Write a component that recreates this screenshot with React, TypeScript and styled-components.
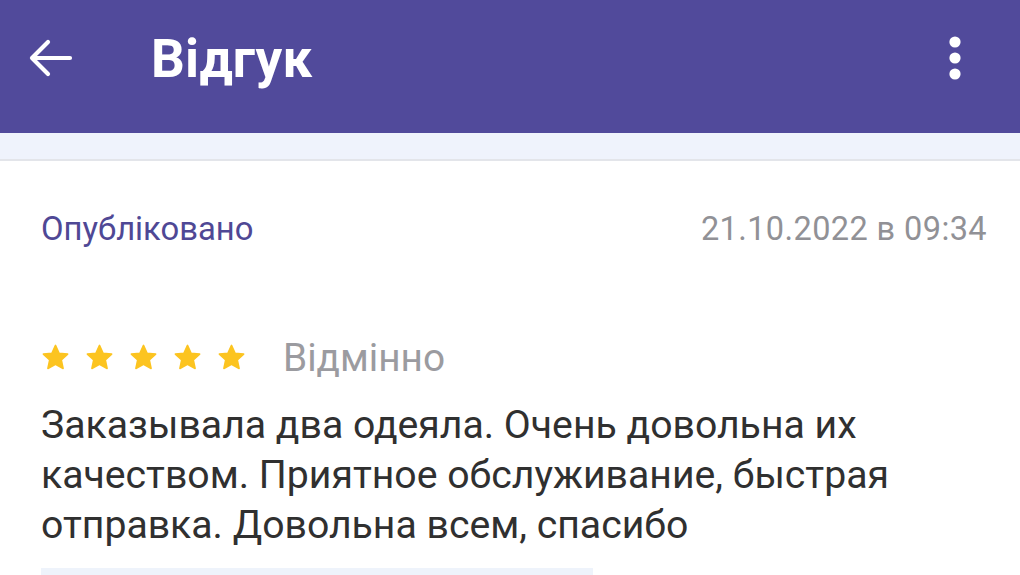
import React from "react";
import styled, { createGlobalStyle } from "styled-components";

const Global = createGlobalStyle`
  html, body { margin: 0; padding: 0; background: #ffffff; }
  body { font-family: Roboto, "Noto Sans", sans-serif; overflow: hidden; }
  * { box-sizing: border-box; }
`;

const Page = styled.div`
  width: 1020px;
  height: 575px;
  display: flex;
  flex-direction: column;
  background: #ffffff;
  overflow: hidden;
`;

const AppBar = styled.header`
  height: 133px;
  flex: none;
  background: #514a9b;
  display: flex;
  align-items: center;
  padding: 0 39px 0 24px;
  color: #ffffff;
`;

const IconButton = styled.div`
  width: 52px;
  height: 52px;
  display: flex;
  align-items: center;
  justify-content: center;
  margin-top: -18px;
`;

const Title = styled.h1`
  margin: -16px 0 0 75px;
  flex: 1;
  font-size: 53px;
  font-weight: 700;
  letter-spacing: 0.3px;
`;

const Band = styled.div`
  height: 28px;
  flex: none;
  background: #eff3fc;
  border-bottom: 2px solid #e3e5ea;
`;

const Content = styled.main`
  padding: 47px 33px 0 41px;
  display: flex;
  flex-direction: column;
`;

const MetaRow = styled.div`
  display: flex;
  justify-content: space-between;
  align-items: center;
  height: 42px;
`;

const Status = styled.span`
  color: #4f4895;
  font-size: 32.8px;
`;

const DateText = styled.span`
  color: #919196;
  font-size: 32.5px;
  letter-spacing: 0.4px;
`;

const RatingRow = styled.div`
  display: flex;
  align-items: center;
  margin-top: 85px;
  height: 44px;
`;

const Stars = styled.div`
  display: flex;
  gap: 13px;
  margin-right: 36px;
  margin-left: -1px;
`;

const Grade = styled.span`
  color: #9b9ba0;
  font-size: 38.8px;
`;

const Body = styled.p`
  margin: 21px 0 0 0;
  color: #303030;
  font-size: 39.2px;
  line-height: 50px;
  width: 940px;
`;

const Footer = styled.div`
  margin-top: 18px;
  width: 552px;
  height: 20px;
  background: #eef3fb;
`;

const Star = () => (
  <svg width="31" height="31" viewBox="0 0 24 24">
    <path
      d="M12 2.6l2.8 6.1 6.6.7-4.9 4.5 1.4 6.6L12 17.2l-5.9 3.3 1.4-6.6-4.9-4.5 6.6-.7z"
      fill="#fcc420"
      stroke="#fcc420"
      strokeWidth="1.2"
      strokeLinejoin="round"
    />
  </svg>
);

export default function App() {
  return (
    <>
      <Global />
      <Page>
        <AppBar>
          <IconButton>
            <svg width="48" height="48" viewBox="0 0 48 48" fill="none">
              <path
                d="M44 24H6M22 8L6 24l16 16"
                stroke="#fff"
                strokeWidth="4.2"
                strokeLinecap="round"
                strokeLinejoin="round"
              />
            </svg>
          </IconButton>
          <Title>Відгук</Title>
          <IconButton>
            <svg width="14" height="46" viewBox="0 0 14 46">
              <circle cx="7" cy="7" r="5.6" fill="#fff" />
              <circle cx="7" cy="23" r="5.6" fill="#fff" />
              <circle cx="7" cy="39" r="5.6" fill="#fff" />
            </svg>
          </IconButton>
        </AppBar>
        <Band />
        <Content>
          <MetaRow>
            <Status>Опубліковано</Status>
            <DateText>21.10.2022 в 09:34</DateText>
          </MetaRow>
          <RatingRow>
            <Stars>
              <Star />
              <Star />
              <Star />
              <Star />
              <Star />
            </Stars>
            <Grade>Відмінно</Grade>
          </RatingRow>
          <Body>
            Заказывала два одеяла. Очень довольна их качеством. Приятное
            обслуживание, быстрая отправка. Довольна всем, спасибо
          </Body>
          <Footer />
        </Content>
      </Page>
    </>
  );
}
